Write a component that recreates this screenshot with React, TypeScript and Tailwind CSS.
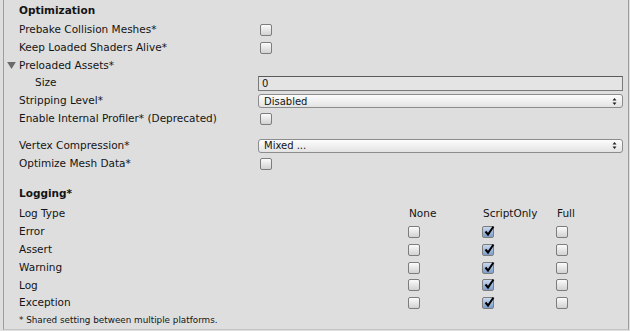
import React from 'react';

const Check: React.FC<{ on?: boolean }> = ({ on }) => (
  <div
    className={`relative w-[12px] h-[12px] rounded-[2px] border border-[#7d7d7d] ${
      on ? 'bg-gradient-to-b from-[#c9d8ee] to-[#7d9dcb]' : 'bg-gradient-to-b from-[#fbfbfb] to-[#d2d2d2]'
    }`}
  >
    {on && (
      <svg viewBox="0 0 12 12" className="absolute left-[0px] top-[-2px] w-[12px] h-[12px]">
        <path d="M2.5 6.5 L5 9.5 L10.5 1.5" stroke="#000" strokeWidth="2" fill="none" />
      </svg>
    )}
  </div>
);

const Row: React.FC<{ label: string; indent?: number; children?: React.ReactNode }> = ({ label, indent = 15, children }) => (
  <div className="flex items-center h-[18px]">
    <div className="w-[254px] shrink-0" style={{ paddingLeft: indent }}>
      {label}
    </div>
    <div className="flex-1 flex items-center pr-[5px]">{children}</div>
  </div>
);

const Popup: React.FC<{ value: string }> = ({ value }) => (
  <div className="flex-1 h-[14px] rounded-[3px] border border-[#8c8c8c] bg-gradient-to-b from-[#fdfdfd] to-[#e3e3e3] flex items-center justify-between pl-[5px] pr-[5px] text-[10px]">
    <span>{value}</span>
    <svg viewBox="0 0 5 9" className="w-[5px] h-[9px]">
      <path d="M0.5 3.5 L2.5 1 L4.5 3.5 Z M0.5 5.5 L2.5 8 L4.5 5.5 Z" fill="#222" />
    </svg>
  </div>
);

const Box: React.FC<{ on?: boolean }> = ({ on }) => (
  <div className="pl-[2px]"><Check on={on} /></div>
);

export default function App() {
  const logs = ['Error', 'Assert', 'Warning', 'Log', 'Exception'];
  return (
    <div className="w-[630px] h-[331px] bg-[#dedede] text-[10.5px] text-[#141414] overflow-hidden" style={{ fontFamily: '"DejaVu Sans", sans-serif' }}>
      <div className="ml-[3px] mr-[1px] h-[330px] pt-[1px] border-l border-r border-b border-[#9d9d9d] border-b-[#c4c4c4] flex flex-col">
        <div className="h-[20px] flex items-center pl-[15px] font-bold">Optimization</div>
        <Row label="Prebake Collision Meshes*"><Box /></Row>
        <Row label="Keep Loaded Shaders Alive*"><Box /></Row>
        <div className="flex items-center h-[18px] pl-[3px] gap-[3px]">
          <svg viewBox="0 0 10 8" className="w-[9px] h-[7px]"><path d="M0 0 H10 L5 8 Z" fill="#6b6b6b" /></svg>
          <span>Preloaded Assets*</span>
        </div>
        <Row label="Size" indent={31}>
          <div className="flex-1 h-[15px] border border-[#7a7a7a] border-t-[#5a5a5a] bg-[#e4e4e4] pl-[3px] flex items-center text-[10px]">0</div>
        </Row>
        <Row label="Stripping Level*"><Popup value="Disabled" /></Row>
        <Row label="Enable Internal Profiler* (Deprecated)"><Box /></Row>
        <div className="h-[9px]" />
        <Row label="Vertex Compression*"><Popup value="Mixed ..." /></Row>
        <Row label="Optimize Mesh Data*"><Box /></Row>
        <div className="h-[13px]" />
        <div className="h-[18px] flex items-center pl-[15px] font-bold">Logging*</div>
        <div className="h-[2px]" />
        <div className="flex items-center h-[18px]">
          <div className="w-[405px] pl-[15px]">Log Type</div>
          <div className="w-[74px]">None</div>
          <div className="w-[74px]">ScriptOnly</div>
          <div>Full</div>
        </div>
        {logs.map((l) => (
          <div key={l} className="flex items-center h-[18px]">
            <div className="w-[404px] pl-[15px]">{l}</div>
            <div className="w-[74px]"><Check /></div>
            <div className="w-[74px]"><Check on /></div>
            <div><Check /></div>
          </div>
        ))}
        <div className="h-[17px] flex items-center pl-[15px] text-[8.8px]">* Shared setting between multiple platforms.</div>
      </div>
    </div>
  );
}
